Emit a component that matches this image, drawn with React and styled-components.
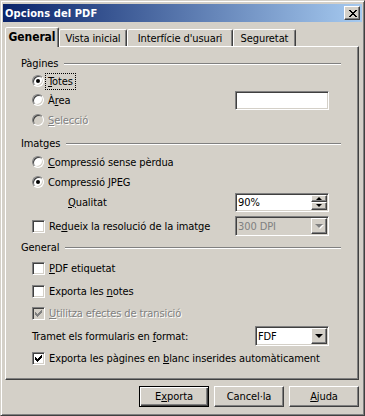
import React from "react";
import styled, { createGlobalStyle } from "styled-components";

const FACE = "#d4d0c8";

const GlobalStyle = createGlobalStyle`
  html, body {
    margin: 0;
    padding: 0;
    background: ${FACE};
  }
  body {
    font-family: "DejaVu Sans Condensed", "DejaVu Sans", "Liberation Sans", sans-serif;
    font-size: 11px;
    letter-spacing: -0.1px;
    color: #000;
  }
`;

const raised = `
  border: 1px solid;
  border-color: #fff #404040 #404040 #fff;
  box-shadow: inset -1px -1px 0 #808080, inset 1px 1px 0 ${FACE};
`;

const sunken = `
  border: 1px solid;
  border-color: #808080 #fff #fff #808080;
  box-shadow: inset 1px 1px 0 #404040, inset -1px -1px 0 ${FACE};
`;

export default function App() {
  return (
    <>
      <GlobalStyle />
      <Window>
        <TitleBar>
          <TitleText>Opcions del PDF</TitleText>
          <CloseButton>
            <svg width="8" height="7" shapeRendering="crispEdges">
              <path
                d="M0 0h2v1h-2z M6 0h2v1h-2z M1 1h2v1h-2z M5 1h2v1h-2z M2 2h4v1h-4z M3 3h2v1h-2z M2 4h4v1h-4z M1 5h2v1h-2z M5 5h2v1h-2z M0 6h2v1h-2z M6 6h2v1h-2z"
                fill="#000"
              />
            </svg>
          </CloseButton>
        </TitleBar>

        <Body>
          <TabRow>
            <Tab $active $w={54}>General</Tab>
            <Tab $w={68}>Vista inicial</Tab>
            <Tab $w={106}>Interfície d'usuari</Tab>
            <Tab $w={63}>Seguretat</Tab>
          </TabRow>

          <Panel>
            <Row $mt={0}>
              <HeadText>Pàgines</HeadText>
              <HeadLine />
            </Row>
            <Row $mt={0} $indent={11}>
              <Option>
                <Radio checked />
                <Focus>
                  <U>T</U>otes
                </Focus>
              </Option>
            </Row>
            <Row $mt={1} $indent={11}>
              <Option>
                <Radio />
                <span>
                  À<U>r</U>ea
                </span>
              </Option>
              <Field $w={94} />
            </Row>
            <Row $mt={2} $indent={11}>
              <Option $disabled>
                <Radio disabled />
                <span>
                  <U>S</U>elecció
                </span>
              </Option>
            </Row>

            <Row $mt={5}>
              <HeadText>Imatges</HeadText>
              <HeadLine />
            </Row>
            <Row $mt={1} $indent={11}>
              <Option>
                <Radio />
                <span>
                  <U>C</U>ompressió sense pèrdua
                </span>
              </Option>
            </Row>
            <Row $mt={2} $indent={11}>
              <Option>
                <Radio checked />
                <span>
                  Compressió <U>J</U>PEG
                </span>
              </Option>
            </Row>
            <Row $mt={2} $indent={47}>
              <span>
                <U>Q</U>ualitat
              </span>
              <Field $w={94}>
                <FieldText>90%</FieldText>
                <Spin>
                  <SpinButton>
                    <ArrowUp />
                  </SpinButton>
                  <SpinButton>
                    <ArrowDown />
                  </SpinButton>
                </Spin>
              </Field>
            </Row>
            <Row $mt={6} $indent={11}>
              <Option>
                <Check />
                <span>
                  Re<U>d</U>ueix la resolució de la imatge
                </span>
              </Option>
              <Combo $w={94} $disabled>
                <FieldText $disabled>300 DPI</FieldText>
                <DropButton>
                  <DropArrow $disabled />
                </DropButton>
              </Combo>
            </Row>

            <Row $mt={3}>
              <HeadText>General</HeadText>
              <HeadLine />
            </Row>
            <Row $mt={3} $indent={11}>
              <Option>
                <Check />
                <span>
                  <U>P</U>DF etiquetat
                </span>
              </Option>
            </Row>
            <Row $mt={5} $indent={11}>
              <Option>
                <Check />
                <span>
                  Exporta les <U>n</U>otes
                </span>
              </Option>
            </Row>
            <Row $mt={4} $indent={11}>
              <Option $disabled>
                <Check checked disabled />
                <span>
                  <U>U</U>tilitza efectes de transició
                </span>
              </Option>
            </Row>
            <Row $mt={5} $indent={11}>
              <span>
                Tramet els formularis en <U>f</U>ormat:
              </span>
              <Combo $w={74}>
                <FieldText>FDF</FieldText>
                <DropButton>
                  <DropArrow />
                </DropButton>
              </Combo>
            </Row>
            <Row $mt={4} $indent={11}>
              <Option>
                <Check checked />
                <span>
                  Exporta les pàgines en <U>b</U>lanc inserides automàticament
                </span>
              </Option>
            </Row>
          </Panel>

          <ButtonRow>
            <Button $default>
              E<U>x</U>porta
            </Button>
            <Button>Cancel·la</Button>
            <Button>
              <U>A</U>juda
            </Button>
          </ButtonRow>
        </Body>
      </Window>
    </>
  );
}

function Radio({ checked, disabled }) {
  return <RadioCircle $disabled={disabled}>{checked && <RadioDot />}</RadioCircle>;
}

function Check({ checked, disabled }) {
  return (
    <CheckBox $disabled={disabled}>
      {checked && (
        <svg width="7" height="7" shapeRendering="crispEdges">
          <path
            d="M6 0h1v1h-1z M5 1h2v1h-2z M0 2h1v1h-1z M4 2h3v1h-3z M0 3h2v1h-2z M3 3h3v1h-3z M0 4h5v1h-5z M1 5h3v1h-3z M2 6h1v1h-1z"
            fill={disabled ? "#808080" : "#000"}
          />
        </svg>
      )}
    </CheckBox>
  );
}

const Window = styled.div`
  box-sizing: border-box;
  width: 365px;
  height: 416px;
  display: flex;
  flex-direction: column;
  padding: 2px 1px 1px 1px;
  border: 1px solid;
  border-color: ${FACE} #404040 #404040 ${FACE};
  box-shadow: inset 1px 1px 0 #fff, inset -1px -1px 0 #808080;
  background: ${FACE};
`;

const TitleBar = styled.div`
  height: 18px;
  margin: 1px 1px 0 1px;
  display: flex;
  align-items: center;
  justify-content: space-between;
  padding: 0 2px 0 2px;
  background: linear-gradient(to right, #0a246a, #a6caf0);
`;

const TitleText = styled.span`
  color: #fff;
  font-weight: bold;
  font-size: 11px;
  letter-spacing: 0.1px;
`;

const CloseButton = styled.div`
  box-sizing: border-box;
  width: 16px;
  height: 14px;
  background: ${FACE};
  display: flex;
  align-items: center;
  justify-content: center;
  padding-left: 1px;
  ${raised}
`;

const Body = styled.div`
  flex: 1;
  display: flex;
  flex-direction: column;
  padding: 5px 4px 7px 3px;
`;

const TabRow = styled.div`
  height: 19px;
  display: flex;
  align-items: flex-end;
`;

const Tab = styled.div`
  box-sizing: border-box;
  width: ${(p) => p.$w}px;
  height: ${(p) => (p.$active ? 20 : 17)}px;
  margin-bottom: ${(p) => (p.$active ? -1 : 0)}px;
  position: relative;
  z-index: ${(p) => (p.$active ? 1 : 0)};
  display: flex;
  align-items: center;
  justify-content: center;
  padding-bottom: ${(p) => (p.$active ? 2 : 0)}px;
  font-weight: ${(p) => (p.$active ? "bold" : "normal")};
  font-size: ${(p) => (p.$active ? 12 : 11)}px;
  background: ${FACE};
  border: 1px solid;
  border-bottom: none;
  border-color: #fff #404040 transparent #fff;
  border-radius: 2px 2px 0 0;
  box-shadow: inset -1px 0 0 #808080;
`;

const Panel = styled.div`
  flex: 1;
  display: flex;
  flex-direction: column;
  padding: 7px 17px 0 15px;
  border: 1px solid;
  border-color: #fff #404040 #404040 #fff;
  box-shadow: inset -1px -1px 0 #808080;
`;

const Row = styled.div`
  height: 18px;
  flex-shrink: 0;
  margin-top: ${(p) => p.$mt}px;
  padding-left: ${(p) => p.$indent || 0}px;
  display: flex;
  align-items: center;
  justify-content: space-between;
  white-space: nowrap;
`;

const HeadText = styled.span`
  margin-right: 6px;
`;

const HeadLine = styled.span`
  flex: 1;
  height: 0;
  border-top: 1px solid #808080;
  border-bottom: 1px solid #fff;
  margin-top: 1px;
`;

const Option = styled.label`
  display: flex;
  align-items: center;
  gap: 4px;
  color: ${(p) => (p.$disabled ? "#808080" : "#000")};
  text-shadow: ${(p) => (p.$disabled ? "1px 1px 0 #fff" : "none")};
`;

const Focus = styled.span`
  outline: 1px dotted #000;
  outline-offset: 1px;
  padding: 0 1px;
  margin-left: -1px;
`;

const U = styled.span`
  text-decoration: underline;
`;

const RadioCircle = styled.span`
  box-sizing: border-box;
  width: 12px;
  height: 12px;
  flex-shrink: 0;
  border-radius: 50%;
  border: 1px solid;
  border-color: #808080 #fff #fff #808080;
  box-shadow: inset 1px 1px 0 #404040, inset -1px -1px 0 ${FACE};
  background: ${(p) => (p.$disabled ? FACE : "#fff")};
  display: flex;
  align-items: center;
  justify-content: center;
`;

const RadioDot = styled.span`
  width: 4px;
  height: 4px;
  border-radius: 50%;
  background: #000;
`;

const CheckBox = styled.span`
  box-sizing: border-box;
  width: 13px;
  height: 13px;
  flex-shrink: 0;
  ${sunken}
  background: ${(p) => (p.$disabled ? FACE : "#fff")};
  display: flex;
  align-items: center;
  justify-content: center;
`;

const Field = styled.div`
  box-sizing: border-box;
  width: ${(p) => p.$w}px;
  height: 19px;
  margin-right: 12px;
  background: #fff;
  ${sunken}
  display: flex;
  align-items: stretch;
  padding: 1px;
`;

const Combo = styled(Field)`
  height: 20px;
  background: ${(p) => (p.$disabled ? FACE : "#fff")};
`;

const FieldText = styled.span`
  flex: 1;
  display: flex;
  align-items: center;
  padding-left: 1px;
  color: ${(p) => (p.$disabled ? "#808080" : "#000")};
`;

const Spin = styled.div`
  width: 16px;
  display: flex;
  flex-direction: column;
`;

const SpinButton = styled.div`
  box-sizing: border-box;
  flex: 1;
  background: ${FACE};
  ${raised}
  display: flex;
  align-items: center;
  justify-content: center;
`;

const ArrowUp = styled.span`
  width: 0;
  height: 0;
  border-left: 3px solid transparent;
  border-right: 3px solid transparent;
  border-bottom: 3px solid #000;
`;

const ArrowDown = styled.span`
  width: 0;
  height: 0;
  border-left: 3px solid transparent;
  border-right: 3px solid transparent;
  border-top: 3px solid #000;
`;

const DropButton = styled.div`
  box-sizing: border-box;
  width: 16px;
  background: ${FACE};
  ${raised}
  display: flex;
  align-items: center;
  justify-content: center;
`;

const DropArrow = styled.span`
  width: 0;
  height: 0;
  border-left: 4px solid transparent;
  border-right: 4px solid transparent;
  border-top: 4px solid ${(p) => (p.$disabled ? "#808080" : "#000")};
  filter: ${(p) => (p.$disabled ? "drop-shadow(1px 1px 0 #fff)" : "none")};
`;

const ButtonRow = styled.div`
  display: flex;
  justify-content: flex-end;
  gap: 5px;
  margin-top: 6px;
`;

const Button = styled.div`
  box-sizing: border-box;
  width: 70px;
  height: 21px;
  background: ${FACE};
  display: flex;
  align-items: center;
  justify-content: center;
  ${(p) =>
    p.$default
      ? `
    border: 1px solid #000;
    box-shadow: inset 1px 1px 0 #fff, inset -1px -1px 0 #404040, inset -2px -2px 0 #808080;
  `
      : raised}
`;
